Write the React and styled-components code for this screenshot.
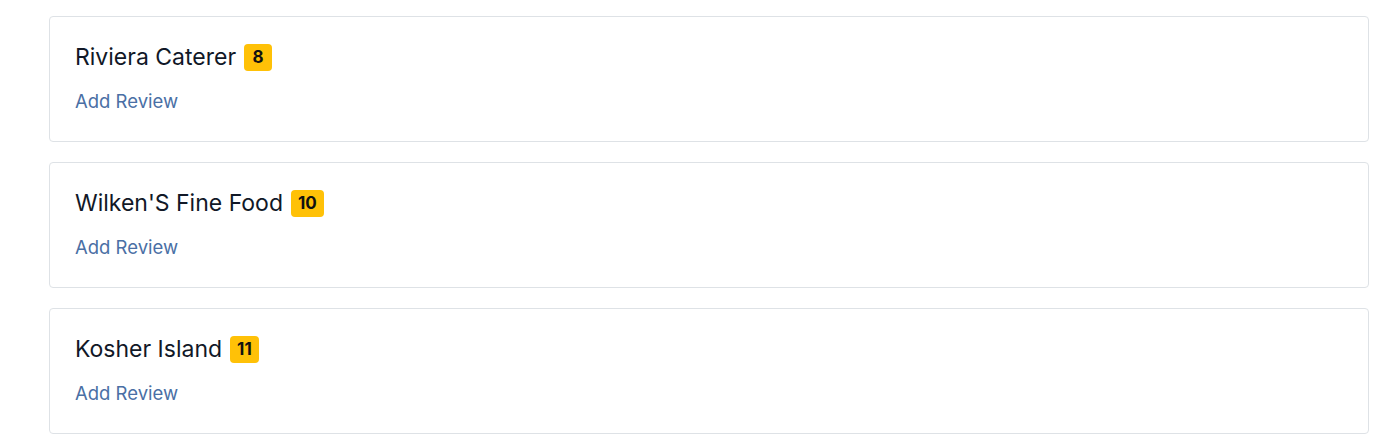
import React from 'react';
import styled, { createGlobalStyle } from 'styled-components';

const GlobalStyle = createGlobalStyle`
  body {
    margin: 0;
    background: #fff;
    font-family: Inter, "Noto Sans", sans-serif;
    color: #111827;
  }
`;

const List = styled.div`
  display: flex;
  flex-direction: column;
  gap: 20px;
  padding: 16px 31px 0 49px;
`;

const Card = styled.div`
  border: 1px solid #dee2e6;
  border-radius: 4px;
  padding: 25px 25px 26px;
  display: flex;
  flex-direction: column;
  gap: 16px;
`;

const TitleRow = styled.div`
  display: flex;
  align-items: center;
  gap: 8px;
  height: 30px;
`;

const Title = styled.span`
  font-size: 23px;
  color: #111827;
`;

const Badge = styled.span`
  background: #ffc107;
  color: #111;
  font-weight: 700;
  font-size: 17px;
  border-radius: 4px;
  min-width: 28px;
  height: 27px;
  padding: 0 7px;
  box-sizing: border-box;
  display: inline-flex;
  align-items: center;
  justify-content: center;
`;

const ReviewLink = styled.a`
  font-size: 18.5px;
  line-height: 27px;
  color: #4a6fa5;
  text-decoration: none;
  align-self: flex-start;
  cursor: pointer;
`;

const restaurants = [
  { name: 'Riviera Caterer', count: 8 },
  { name: "Wilken'S Fine Food", count: 10 },
  { name: 'Kosher Island', count: 11 },
];

export default function App() {
  return (
    <>
      <GlobalStyle />
      <List>
        {restaurants.map((r) => (
          <Card key={r.name}>
            <TitleRow>
              <Title>{r.name}</Title>
              <Badge>{r.count}</Badge>
            </TitleRow>
            <ReviewLink>Add Review</ReviewLink>
          </Card>
        ))}
      </List>
    </>
  );
}
